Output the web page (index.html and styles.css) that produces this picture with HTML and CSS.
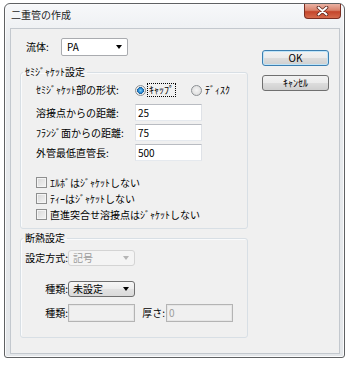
FILE: index.html
```html
<!DOCTYPE html>
<html lang="ja">
  <head>
    <meta charset="utf-8" />
    <title>二重管の作成</title>
    <link rel="stylesheet" href="styles.css">
  </head>
  <body>
    <div class="window">
      <div class="titlebar">
        <span class="title">二重管の作成</span>
        <div class="close-btn">
          <svg width="13" height="10" viewBox="0 0 13 10">
            <path d="M2.5 1.5 L10.5 8.5 M10.5 1.5 L2.5 8.5" stroke="#5a2219" stroke-width="3.6" stroke-linecap="round" />
            <path d="M2.5 1.5 L10.5 8.5 M10.5 1.5 L2.5 8.5" stroke="#ffffff" stroke-width="2" stroke-linecap="round" />
          </svg>
        </div>
      </div>

      <div class="client">
        <div class="form">
          <div class="fluid-row">
            <span class="lbl">流体:</span>
            <div class="combo combo-edit"><span>PA</span><span class="arrow"></span></div>
          </div>

          <fieldset class="group">
            <legend>ｾﾐｼﾞｬｹｯﾄ設定</legend>
            <div class="jacket-body">
              <div class="field shape-row">
                <span class="lbl">ｾﾐｼﾞｬｹｯﾄ部の形状:</span>
                <div class="radios">
                  <label class="radio-opt">
                    <span class="radio checked"></span>
                    <span class="radio-text focused">ｷｬｯﾌﾟ</span>
                  </label>
                  <label class="radio-opt">
                    <span class="radio"></span>
                    <span class="radio-text">ﾃﾞｨｽｸ</span>
                  </label>
                </div>
              </div>
              <div class="inputs">
                <div class="field">
                  <span class="lbl">溶接点からの距離:</span>
                  <div class="textbox">25</div>
                </div>
                <div class="field">
                  <span class="lbl">ﾌﾗﾝｼﾞ面からの距離:</span>
                  <div class="textbox">75</div>
                </div>
                <div class="field">
                  <span class="lbl">外管最低直管長:</span>
                  <div class="textbox">500</div>
                </div>
              </div>
              <div class="checks">
                <label class="check-row"><span class="checkbox"></span>ｴﾙﾎﾞはｼﾞｬｹｯﾄしない</label>
                <label class="check-row"><span class="checkbox"></span>ﾃｨｰはｼﾞｬｹｯﾄしない</label>
                <label class="check-row"><span class="checkbox"></span>直進突合せ溶接点はｼﾞｬｹｯﾄしない</label>
              </div>
            </div>
          </fieldset>

          <fieldset class="group group-insul">
            <legend>断熱設定</legend>
            <div class="insul-body">
              <div class="insul-row">
                <span class="lbl">設定方式:</span>
                <div class="combo combo-disabled"><span>記号</span><span class="arrow"></span></div>
              </div>
              <div class="insul-row row-kind">
                <span class="lbl">種類:</span>
                <div class="combo combo-list"><span>未設定</span><span class="arrow"></span></div>
              </div>
              <div class="insul-row row-thick">
                <span class="lbl">種類:</span>
                <div class="textbox textbox-disabled"></div>
                <span class="lbl thick-lbl">厚さ:</span>
                <div class="textbox textbox-disabled">0</div>
              </div>
            </div>
          </fieldset>
        </div>

        <div class="buttons">
          <button class="btn btn-default">OK</button>
          <button class="btn">ｷｬﾝｾﾙ</button>
        </div>
      </div>
    </div>
  </body>
</html>
```

FILE: styles.css
```css
html,
body {
  margin: 0;
  padding: 0;
}

body {
  background: #ffffff;
  font-family: "Noto Sans CJK JP", "Noto Sans", sans-serif;
  font-size: 10px;
  color: #000000;
}

/* Window frame
 * ============ */

.window {
  width: 339px;
  height: 353px;
  margin: 3px 0 0 4px;
  border: 1px solid #5f6163;
  border-radius: 6px 6px 3px 3px;
  background: linear-gradient(#f7f8fa, #e9ecef 40px, #e4e7ea);
  box-shadow: inset 0 0 0 1px #fbfbfc;
  display: flex;
  flex-direction: column;
}

.titlebar {
  height: 24px;
  display: flex;
  align-items: flex-start;
}

.title {
  padding-left: 6px;
  line-height: 22px;
  color: #1e1e1e;
}

.close-btn {
  margin-left: auto;
  margin-right: 3px;
  width: 37px;
  height: 15px;
  box-sizing: border-box;
  border: 1px solid #7b2e22;
  border-top: 0;
  border-radius: 0 0 4px 4px;
  background: linear-gradient(#eab2a4, #d9826b 45%, #c4452b 55%, #d56a4c);
  display: flex;
  justify-content: center;
  align-items: center;
}

.client {
  flex: 1;
  margin: 0 4px 3px 5px;
  border: 1px solid #c3c8ce;
  background: #f0f0f0;
  display: flex;
  padding: 9px 0 0 9px;
}

.form {
  width: 228px;
}

.lbl {
  white-space: nowrap;
  line-height: 14px;
}

/* Controls
 * ======== */

.fluid-row {
  height: 18px;
  display: grid;
  grid-template-columns: 35px 67px;
  align-items: center;
  padding-left: 6px;
}

.combo {
  box-sizing: border-box;
  height: 18px;
  display: flex;
  align-items: center;
  justify-content: space-between;
  padding: 0 5px 0 4px;
  border-radius: 2px;
  line-height: 14px;
}

.combo .arrow {
  width: 0;
  height: 0;
  border-top: 4px solid #000000;
  border-left: 3.5px solid transparent;
  border-right: 3.5px solid transparent;
}

.combo-edit {
  background: #ffffff;
  border: 1px solid #a9abaf;
  padding-left: 5px;
}

.combo-list {
  height: 16px;
  border: 1px solid #6f6f6f;
  border-radius: 3px;
  background: linear-gradient(#f6f6f6, #ececec 50%, #e2e2e2 50%, #dadada);
}

.combo-disabled {
  height: 16px;
  border: 1px solid #d4d4d4;
  border-radius: 3px;
  background: #f4f4f4;
  color: #9c9c9c;
}

.combo-disabled .arrow {
  border-top-color: #b5b5b5;
}

.textbox {
  box-sizing: border-box;
  width: 67px;
  height: 17px;
  border: 1px solid;
  border-color: #b9bcc2 #dfe2e7 #e5e9ee #dfe2e7;
  background: #ffffff;
  padding-left: 2px;
  line-height: 15px;
}

.textbox-disabled {
  height: 18px;
  border: 1px solid #b4b4b4;
  box-shadow: inset 0 0 0 1px #e6e6e6;
  background: #f0f0f0;
  color: #9c9c9c;
}

/* Group boxes
 * =========== */

.group {
  margin: 10px 0 0 0;
  padding: 0;
  min-width: 0;
  border: 1px solid #d8dfe5;
  border-radius: 3px;
  box-shadow: inset 1px 1px 0 #fafbfc;
}

.group legend {
  margin-left: 2px;
  padding: 0 2px;
  line-height: 12px;
}

.group-insul {
  margin-top: 3px;
}

.jacket-body {
  padding: 4px 0 6px 15px;
}

.field {
  display: grid;
  grid-template-columns: 99px auto;
  align-items: center;
  height: 17px;
}

.shape-row {
  height: 16px;
  margin-bottom: 6px;
}

.inputs {
  display: flex;
  flex-direction: column;
  gap: 3px;
}

.radios {
  display: flex;
  align-items: center;
  gap: 15px;
}

.radio-opt {
  display: flex;
  align-items: center;
  gap: 1px;
}

.radio {
  box-sizing: border-box;
  width: 11px;
  height: 11px;
  border-radius: 50%;
  border: 1px solid #8c9094;
  background: radial-gradient(circle at 50% 45%, #f4f4f4, #d6d6d6);
}

.radio.checked {
  background: radial-gradient(circle, #7fd0f5 0, #2a8ad4 2.2px, #1d5f99 3.2px, #e8e8e8 3.6px, #f3f3f3 5px);
}

.radio-text {
  padding: 0 1px;
  line-height: 12px;
  border: 1px solid transparent;
}

.radio-text.focused {
  border: 1px dotted #000000;
}

.checks {
  margin-top: 13px;
}

.check-row {
  height: 16px;
  display: flex;
  align-items: center;
  gap: 3px;
  white-space: nowrap;
}

.checkbox {
  box-sizing: border-box;
  width: 11px;
  height: 11px;
  border: 1px solid #8e8f8f;
  background: linear-gradient(135deg, #d7d7d7, #f4f4f4);
  box-shadow: inset 0 0 0 1px #f4f4f4;
}

.insul-body {
  padding: 6px 0 15px 1px;
}

.insul-row {
  display: grid;
  grid-template-columns: 46px 67px;
  align-items: center;
}

.insul-row .lbl {
  text-align: right;
}

.row-kind {
  margin-top: 15px;
}

.row-thick {
  margin-top: 7px;
  grid-template-columns: 46px 67px 31px 67px;
}

.thick-lbl {
  padding-right: 1px;
}

/* Buttons
 * ======= */

.buttons {
  margin-left: 14px;
  padding-top: 12px;
  display: flex;
  flex-direction: column;
  gap: 9px;
}

.btn {
  width: 67px;
  height: 16px;
  margin: 0;
  padding: 0;
  border: 1px solid #707070;
  border-radius: 3px;
  background: linear-gradient(#f2f2f2, #ebebeb 50%, #dddddd 50%, #cfcfcf);
  font-family: inherit;
  font-size: 10px;
  line-height: 14px;
  color: #000000;
}

.btn-default {
  border-color: #3c7fb1;
  box-shadow: inset 0 0 0 1px #bfe4f8;
}
```
